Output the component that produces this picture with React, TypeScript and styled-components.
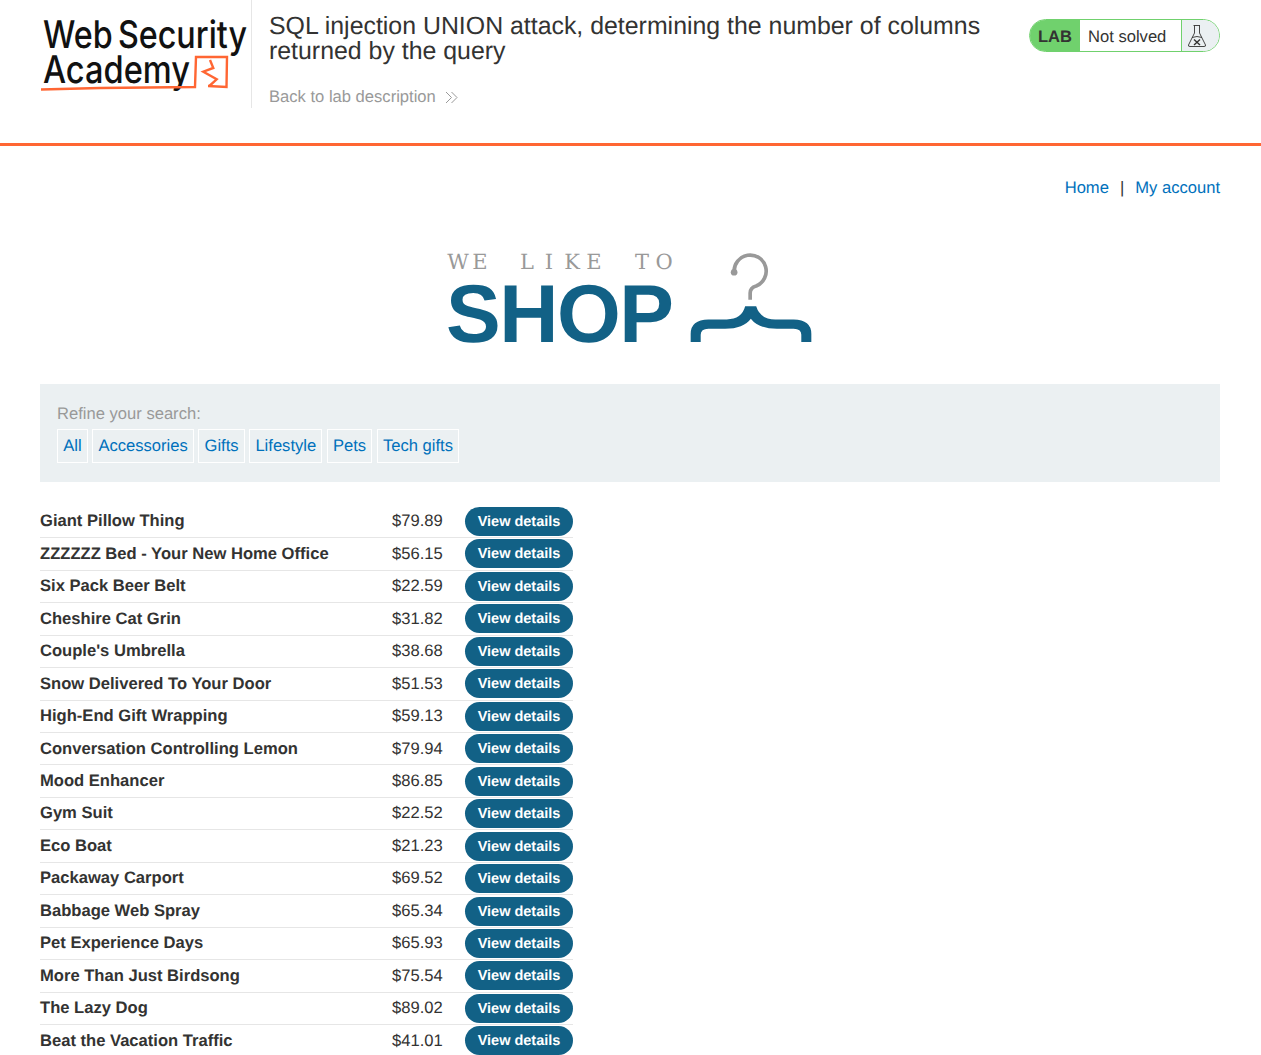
import React from 'react'
import styled, { createGlobalStyle } from 'styled-components'

const products = [
  ['Giant Pillow Thing', '$79.89'],
  ['ZZZZZZ Bed - Your New Home Office', '$56.15'],
  ['Six Pack Beer Belt', '$22.59'],
  ['Cheshire Cat Grin', '$31.82'],
  ["Couple's Umbrella", '$38.68'],
  ['Snow Delivered To Your Door', '$51.53'],
  ['High-End Gift Wrapping', '$59.13'],
  ['Conversation Controlling Lemon', '$79.94'],
  ['Mood Enhancer', '$86.85'],
  ['Gym Suit', '$22.52'],
  ['Eco Boat', '$21.23'],
  ['Packaway Carport', '$69.52'],
  ['Babbage Web Spray', '$65.34'],
  ['Pet Experience Days', '$65.93'],
  ['More Than Just Birdsong', '$75.54'],
  ['The Lazy Dog', '$89.02'],
  ['Beat the Vacation Traffic', '$41.01'],
]

const filters = ['All', 'Accessories', 'Gifts', 'Lifestyle', 'Pets', 'Tech gifts']

const GlobalStyle = createGlobalStyle`
  html, body {
    margin: 0;
    height: 1055px;
    overflow: hidden;
    background: #fff;
    color: #333332;
    font-family: "Liberation Sans", Arial, sans-serif;
    font-size: 16.58px;
    text-rendering: geometricPrecision;
  }
  a { color: #0071bc; text-decoration: none; }
`

const Banner = styled.header`
  height: 143px;
  padding: 0 41px 0 40px;
  display: flex;
  align-items: flex-start;
  border-bottom: 3px solid #ff6633;
`

const LogoBox = styled.div`
  width: 211px;
  height: 108px;
  flex: none;
  border-right: 1px solid #e6e6e6;
`

const LogoSvg = styled.svg`
  display: block;
  width: 211px;
  height: 108px;
`

const TitleBlock = styled.div`
  flex: 1;
  padding: 14px 0 0 17px;
`

const Title = styled.h2`
  margin: 0;
  width: 730px;
  font-size: 24.88px;
  line-height: 25px;
  font-weight: 400;
`

const BackLink = styled.a`
  display: flex;
  align-items: center;
  gap: 9px;
  margin-top: 22px;
  color: #999;
  line-height: 22px;
`

const LabStatus = styled.div`
  width: 191px;
  height: 33px;
  box-sizing: border-box;
  margin-top: 19px;
  flex: none;
  display: flex;
  align-items: stretch;
  border: 1px solid #70d16d;
  border-radius: 17px;
  overflow: hidden;
`

const LabTag = styled.span`
  width: 50px;
  background: #70d16d;
  font-weight: 700;
  text-align: center;
  line-height: 34px;
  box-sizing: border-box;
`

const LabState = styled.span`
  flex: 1;
  padding-left: 8px;
  line-height: 33px;
`

const LabIcon = styled.span`
  width: 38px;
  background: #ebf0f2;
  border-left: 1px solid #70d16d;
  display: flex;
  align-items: center;
  padding-left: 5px;
  box-sizing: border-box;
`

const Main = styled.main`
  padding: 0 41px 0 40px;
`

const TopLinks = styled.nav`
  display: flex;
  justify-content: flex-end;
  gap: 11px;
  padding-top: 32px;
  line-height: 20px;
`

const ShopLogo = styled.div`
  display: flex;
  justify-content: center;
  padding-top: 52px;
  height: 134px;
`

const ShopSvg = styled.svg`
  display: block;
  width: 363px;
  height: 96px;
  overflow: visible;
`

const FilterPanel = styled.section`
  height: 98px;
  box-sizing: border-box;
  padding: 20px 17px 0;
  background: #ebf0f2;
`

const FilterLabel = styled.div`
  color: #999;
  line-height: 20px;
`

const FilterList = styled.div`
  display: flex;
  gap: 4.4px;
  margin-top: 5.4px;
`

const FilterChip = styled.a`
  height: 34px;
  box-sizing: border-box;
  border: 1px solid #fff;
  padding: 0 5.2px;
  line-height: 32px;
`

const ProductList = styled.div`
  width: 533px;
  margin-top: 23.7px;
`

const ProductRow = styled.div`
  height: 32.48px;
  box-sizing: border-box;
  display: grid;
  grid-template-columns: 352px 73px 108px;
  align-items: center;
  border-bottom: 1px solid #e6e6e6;
`

const ProductName = styled.span`
  font-weight: 700;
  margin-top: -0.4px;
`

const ProductPrice = styled.span`
  margin-top: -0.4px;
`

const DetailsButton = styled.a`
  display: block;
  height: 29px;
  line-height: 30px;
  border-radius: 14.5px;
  background: #126186;
  color: #fff;
  font-size: 14.5px;
  font-weight: 700;
  text-align: center;
`

const WsaLogo = () => (
  <LogoSvg viewBox="0 0 211 108">
    <g fontFamily="Inter" fontWeight="500" fontSize="38" fill="#111">
      <text x="3" y="48" textLength="204" lengthAdjust="spacingAndGlyphs" wordSpacing="-4">
        Web Security
      </text>
      <text x="3" y="83" textLength="147" lengthAdjust="spacingAndGlyphs">
        Academy
      </text>
    </g>
    <g fill="none" stroke="#ff6633" strokeWidth="2.4">
      <path d="M1 89.5 L60 88 L155 87 L156 57 H187 L186.5 87 L168 86" />
      <path d="M170 60 L173.3 68 L163.3 71.7 L176.7 79.3 L169.3 86" />
    </g>
  </LogoSvg>
)

const Chevrons = () => (
  <svg width="13" height="13" viewBox="0 0 13 13" fill="none" stroke="#999" strokeWidth="1">
    <path d="M1 1 L6.5 6.5 L1 12" />
    <path d="M6.5 1 L12 6.5 L6.5 12" />
  </svg>
)

const Flask = () => (
  <svg width="20" height="24" viewBox="0 0 20 24" fill="none" stroke="#333332" strokeWidth="0.9">
    <path d="M6.5 1.5 H13 M7.5 1.5 V9 L1.5 21 Q1 22.5 3 22.5 H17 Q19 22.5 18.5 21 L12.5 9 V1.5" />
    <path d="M5 13.5 Q10 11.5 15 13.5" />
    <path d="M7 15.5 L13 21 M13 15.5 L7 21" strokeWidth="1.4" />
  </svg>
)

const Hanger = () => (
  <svg x="241" y="1.67" width="122" height="94" viewBox="780 35 365 280">
    <path d="M912 95 A48 48 0 1 1 978 137 Q960 142 960 158 V178" fill="none" stroke="#999" strokeWidth="11" />
    <circle cx="912" cy="96" r="10" fill="#999" />
    <path
      d="M782 305 V280 Q782 238 835 237 H890 Q935 237 945 198 H978 Q990 237 1035 237 H1090 Q1143 238 1143 280 V305 H1113 V283 Q1113 265 1090 265 H1040 Q985 265 962 235 Q940 265 885 265 H835 Q812 265 812 283 V305 Z"
      fill="#126186"
    />
  </svg>
)

const App = () => (
  <>
    <GlobalStyle />
    <Banner>
      <LogoBox>
        <WsaLogo />
      </LogoBox>
      <TitleBlock>
        <Title>SQL injection UNION attack, determining the number of columns returned by the query</Title>
        <BackLink href="#">
          Back to lab description <Chevrons />
        </BackLink>
      </TitleBlock>
      <LabStatus>
        <LabTag>LAB</LabTag>
        <LabState>Not solved</LabState>
        <LabIcon>
          <Flask />
        </LabIcon>
      </LabStatus>
    </Banner>
    <Main>
      <TopLinks>
        <a href="#">Home</a>
        <span>|</span>
        <a href="#">My account</a>
      </TopLinks>
      <ShopLogo>
        <ShopSvg viewBox="0 0 363 96">
          <text
            x="9 31 56 78 100 123 145 170 193 215"
            y="19"
            textAnchor="middle"
            fontFamily="DejaVu Serif"
            fontSize="21"
            fill="#999"
          >
            WE LIKE TO
          </text>
          <text x="-3" y="92" fontFamily="Liberation Sans" fontWeight="700" fontSize="82" letterSpacing="-1.5" fill="#126186">
            SHOP
          </text>
          <Hanger />
        </ShopSvg>
      </ShopLogo>
      <FilterPanel>
        <FilterLabel>Refine your search:</FilterLabel>
        <FilterList>
          {filters.map(f => (
            <FilterChip href="#" key={f}>
              {f}
            </FilterChip>
          ))}
        </FilterList>
      </FilterPanel>
      <ProductList>
        {products.map(([name, price]) => (
          <ProductRow key={name}>
            <ProductName>{name}</ProductName>
            <ProductPrice>{price}</ProductPrice>
            <DetailsButton href="#">View details</DetailsButton>
          </ProductRow>
        ))}
      </ProductList>
    </Main>
  </>
)

export default App
